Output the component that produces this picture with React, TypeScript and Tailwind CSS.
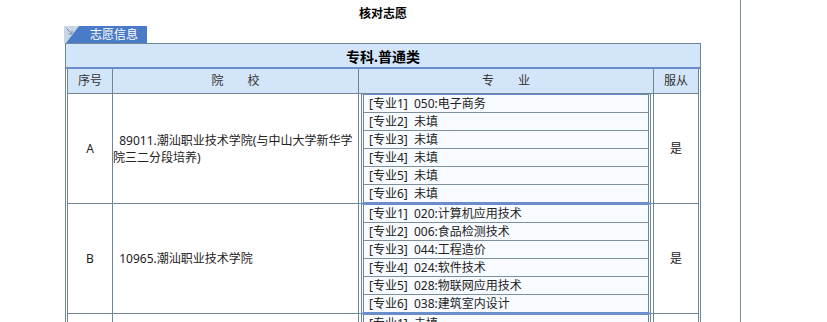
const rows = [
  {
    key: "A",
    school: "  89011.潮汕职业技术学院(与中山大学新华学院三二分段培养)",
    majors: ["050:电子商务", "未填", "未填", "未填", "未填", "未填"],
    obey: "是",
  },
  {
    key: "B",
    school: "  10965.潮汕职业技术学院",
    majors: [
      "020:计算机应用技术",
      "006:食品检测技术",
      "044:工程造价",
      "024:软件技术",
      "028:物联网应用技术",
      "038:建筑室内设计",
    ],
    obey: "是",
  },
  {
    key: "C",
    school: "",
    majors: ["未填", "未填", "未填", "未填", "未填", "未填"],
    obey: "",
  },
];

function Tab() {
  return (
    <div className="relative -ml-[1px] flex h-[17px] w-[83px] items-center pl-[26px] text-[12px] leading-[17px] text-white">
      <svg className="absolute inset-0" width="83" height="17" viewBox="0 0 83 17" aria-hidden>
        <polygon points="0,0 15,0 2,17 0,17" fill="#c9d6e8" />
        <polygon points="15,0 83,0 83,17 2,17" fill="#4a7bc6" />
        <path d="M2.5 2.5 L8 8 M8 4.5 L8 8 L4.5 8" stroke="#7f90a6" strokeWidth="1" fill="none" />
      </svg>
      <span className="relative">志愿信息</span>
    </div>
  );
}

function MajorBox({ majors }: { majors: string[] }) {
  return (
    <div className="mx-[2px] w-[290px] border-x-[3px] border-y border-double border-x-[#6d8594] border-y-[#6b8dca]">
      {majors.map((m, i) => (
        <div
          key={i}
          className={`h-[17px] whitespace-pre bg-[#f8fbff] pl-[5px] leading-[17px] ${
            i < majors.length - 1 ? "h-[18px] border-b border-[#7d8f9c]" : ""
          }`}
        >
          {`[专业${i + 1}]  ${m}`}
        </div>
      ))}
    </div>
  );
}

export default function App() {
  return (
    <div className="min-h-screen bg-white font-['Noto_Sans','Noto_Sans_CJK_SC',sans-serif] text-[12px] text-[#222]">
      <div className="min-h-screen w-[741px] border-r border-[#7a8d9a]">
        <div className="ml-[65px] w-[636px]">
          <div className="flex h-[26px] items-center justify-center pt-[2px] text-[12px] font-bold text-black">
            核对志愿
          </div>
          <Tab />
          <div className="border border-[#6d8594]">
            <div className="flex h-[23px] items-center justify-center bg-[#d3e5f8] pt-[2px] text-[14px] font-bold text-black">
              专科.普通类
            </div>
            <div className="h-[2px] bg-[#6b8dca]" />
            <div className="px-[1px]">
              <div className="grid grid-cols-[45px_246px_295px_46px] bg-[#d3e5f8] text-[#333]">
                <div className="flex h-[25px] items-center justify-center border-b border-l border-[#6d8594]">序号</div>
                <div className="flex h-[25px] items-center justify-center whitespace-pre border-b border-l border-[#6d8594]">院　　校</div>
                <div className="flex h-[25px] items-center justify-center whitespace-pre border-b border-l border-[#6d8594]">专　　业</div>
                <div className="flex h-[25px] items-center justify-center border-x border-b border-[#6d8594]">服从</div>
              </div>
              {rows.map((r) => (
                <div key={r.key} className="grid grid-cols-[45px_246px_295px_46px] text-[#222]">
                  <div className="flex h-[110px] items-center justify-center border-b border-l border-[#6d8594]">{r.key}</div>
                  <div className="flex h-[110px] items-center whitespace-pre-wrap border-b border-l border-[#6d8594] leading-[17px]">
                    {r.school}
                  </div>
                  <div className="h-[110px] border-b border-l border-[#6d8594] border-b-[#6b8dca]">
                    <MajorBox majors={r.majors} />
                  </div>
                  <div className="flex h-[110px] items-center justify-center border-x border-b border-[#6d8594]">{r.obey}</div>
                </div>
              ))}
            </div>
          </div>
        </div>
      </div>
    </div>
  );
}
